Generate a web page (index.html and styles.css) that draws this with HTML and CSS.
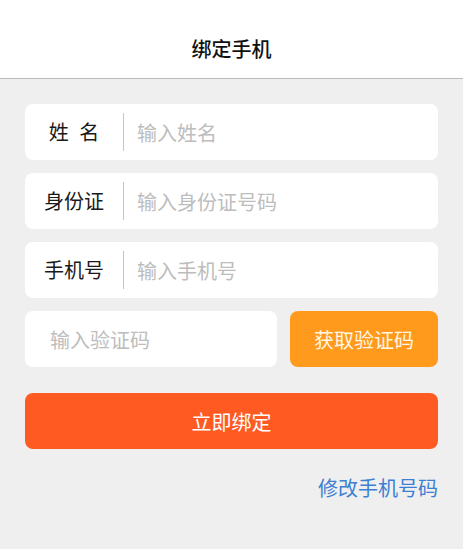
FILE: index.html
```html
<!DOCTYPE html>
<html lang="zh-CN">
<head>
  <meta charset="UTF-8" />
  <title>绑定手机</title>
  <meta name="viewport" content="width=device-width, initial-scale=1" />
  <link rel="stylesheet" href="styles.css">
</head>
<body>
  <header class="topbar">
    <h1>绑定手机</h1>
  </header>

  <form class="bind-form">
    <div class="field">
      <label class="field-label spaced" for="name">姓 名</label>
      <input class="field-input" type="text" id="name" placeholder="输入姓名" />
    </div>

    <div class="field">
      <label class="field-label" for="idcard">身份证</label>
      <input class="field-input" type="text" id="idcard" placeholder="输入身份证号码" />
    </div>

    <div class="field">
      <label class="field-label" for="phone">手机号</label>
      <input class="field-input" type="tel" id="phone" placeholder="输入手机号" />
    </div>

    <div class="code-row">
      <input class="code-input" type="text" placeholder="输入验证码" />
      <button class="code-btn" type="button">获取验证码</button>
    </div>

    <button class="submit-btn" type="button">立即绑定</button>

    <div class="links">
      <a class="change-link" href="#">修改手机号码</a>
    </div>
  </form>
</body>
</html>
```

FILE: styles.css
```css
body {
  font-family: "Noto Sans CJK SC", "Noto Sans", sans-serif;
  background: #efefef;
  margin: 0;
  padding: 0;
}

.topbar {
  background: #fff;
  height: 78px;
  border-bottom: 1px solid #b9b9b9;
  display: flex;
  align-items: center;
  justify-content: center;
}

.topbar h1 {
  margin: 18px 0 0;
  font-size: 20px;
  font-weight: 500;
  color: #111;
}

.bind-form {
  padding: 25px 25px 0;
  display: flex;
  flex-direction: column;
  gap: 13px;
}

.field {
  height: 56px;
  background: #fff;
  border-radius: 8px;
  display: flex;
  align-items: center;
}

.field-label {
  width: 98px;
  text-align: center;
  font-size: 20px;
  color: #1a1a1a;
  border-right: 1px solid #c4c4c4;
  line-height: 38px;
}

.field-label.spaced {
  word-spacing: 6px;
}

.field-input,
.code-input {
  flex: 1;
  border: none;
  outline: none;
  background: transparent;
  font-family: inherit;
  font-size: 20px;
  color: #333;
  padding: 0 0 0 13px;
  min-width: 0;
}

.field-input::placeholder,
.code-input::placeholder {
  color: #bdbdbd;
}

.code-row {
  display: flex;
  gap: 13px;
  height: 56px;
}

.code-input {
  background: #fff;
  border-radius: 8px;
  padding-left: 25px;
}

.code-btn {
  width: 148px;
  background: #ff9a1c;
  color: #fff6e4;
  border: none;
  border-radius: 8px;
  font-family: inherit;
  font-size: 20px;
}

.submit-btn {
  margin-top: 13px;
  height: 56px;
  background: #ff5a22;
  color: #fff;
  border: none;
  border-radius: 8px;
  font-family: inherit;
  font-size: 20px;
}

.links {
  text-align: right;
  margin-top: 11px;
}

.change-link {
  color: #3c7fd3;
  font-size: 20px;
  text-decoration: none;
}
```
